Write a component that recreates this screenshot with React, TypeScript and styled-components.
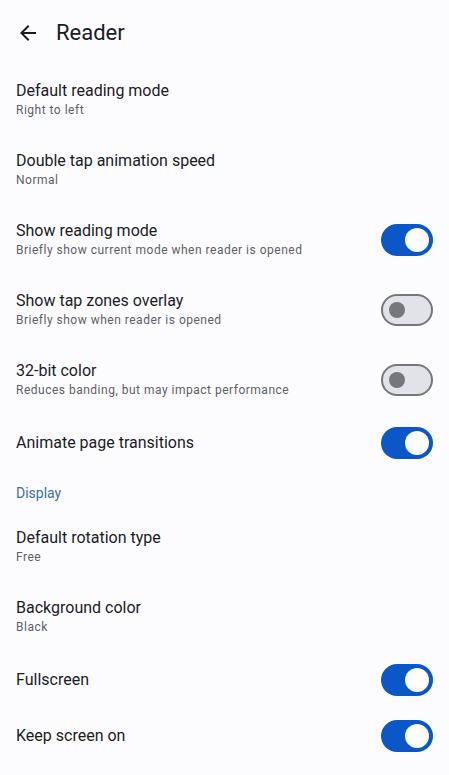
import * as React from "react";
import styled, { createGlobalStyle } from "styled-components";

const GlobalStyle = createGlobalStyle`
  html, body {
    margin: 0;
    padding: 0;
    background: #fcfcff;
    font-family: Roboto, "Noto Sans", sans-serif;
    color: #1b1b1f;
    overflow: hidden;
  }
`;

const Page = styled.div`
  width: 449px;
  height: 775px;
  overflow: hidden;
  background: #fcfcff;
`;

const TopBar = styled.div`
  height: 65px;
  display: flex;
  align-items: center;
  padding: 0 16px;
  gap: 16px;
`;

const BackButton = styled.div`
  width: 24px;
  height: 24px;
  display: flex;
  align-items: center;
  justify-content: center;
  color: #1b1b1f;
`;

const Heading = styled.h1`
  margin: 0;
  font-size: 22px;
  font-weight: 400;
  color: #1b1b1f;
`;

const Row = styled.div<{ $tall: boolean }>`
  height: ${(p) => (p.$tall ? 70 : 56)}px;
  display: flex;
  align-items: center;
  padding: 0 16px;
  gap: 16px;
`;

const Texts = styled.div`
  flex: 1;
  display: flex;
  flex-direction: column;
  gap: 1px;
`;

const Title = styled.div`
  font-size: 16px;
  line-height: 20px;
  color: #1b1b1f;
`;

const Subtitle = styled.div`
  font-size: 12px;
  line-height: 17px;
  letter-spacing: 0.5px;
  color: #5d5e66;
`;

const SectionHeader = styled.div`
  box-sizing: border-box;
  height: 41px;
  display: flex;
  align-items: center;
  padding: 3px 16px 0;
  font-size: 14px;
  color: #3d6ea8;
`;

const Track = styled.div<{ $on: boolean }>`
  box-sizing: border-box;
  width: 52px;
  height: 32px;
  border-radius: 16px;
  flex-shrink: 0;
  display: flex;
  align-items: center;
  justify-content: ${(p) => (p.$on ? "flex-end" : "flex-start")};
  padding: ${(p) => (p.$on ? "0 4px" : "0 6px")};
  background: ${(p) => (p.$on ? "#0b57c8" : "#e2e2e9")};
  border: ${(p) => (p.$on ? "none" : "2px solid #75767e")};
`;

const Thumb = styled.div<{ $on: boolean }>`
  width: ${(p) => (p.$on ? 24 : 16)}px;
  height: ${(p) => (p.$on ? 24 : 16)}px;
  border-radius: 50%;
  background: ${(p) => (p.$on ? "#ffffff" : "#75767e")};
`;

type Item = {
  title: string;
  subtitle?: string;
  toggle?: boolean;
  section?: boolean;
};

const items: Item[] = [
  { title: "Default reading mode", subtitle: "Right to left" },
  { title: "Double tap animation speed", subtitle: "Normal" },
  { title: "Show reading mode", subtitle: "Briefly show current mode when reader is opened", toggle: true },
  { title: "Show tap zones overlay", subtitle: "Briefly show when reader is opened", toggle: false },
  { title: "32-bit color", subtitle: "Reduces banding, but may impact performance", toggle: false },
  { title: "Animate page transitions", toggle: true },
  { title: "Display", section: true },
  { title: "Default rotation type", subtitle: "Free" },
  { title: "Background color", subtitle: "Black" },
  { title: "Fullscreen", toggle: true },
  { title: "Keep screen on", toggle: true },
  // next row sits below the fold, only its switch peeks in
  { title: "", toggle: true },
];

const Switch = ({ on }: { on: boolean }) => (
  <Track $on={on}>
    <Thumb $on={on} />
  </Track>
);

const App = () => {
  return (
    <Page>
      <GlobalStyle />
      <TopBar>
        <BackButton>
          <svg width="24" height="24" viewBox="0 0 24 24" fill="currentColor">
            <path d="M20 11H7.83l5.59-5.59L12 4l-8 8 8 8 1.41-1.41L7.83 13H20v-2z" />
          </svg>
        </BackButton>
        <Heading>Reader</Heading>
      </TopBar>
      {items.map((item, i) =>
        item.section ? (
          <SectionHeader key={i}>{item.title}</SectionHeader>
        ) : (
          <Row key={i} $tall={!!item.subtitle}>
            <Texts>
              {item.title && <Title>{item.title}</Title>}
              {item.subtitle && <Subtitle>{item.subtitle}</Subtitle>}
            </Texts>
            {item.toggle !== undefined && <Switch on={item.toggle} />}
          </Row>
        )
      )}
    </Page>
  );
};

export default App;
